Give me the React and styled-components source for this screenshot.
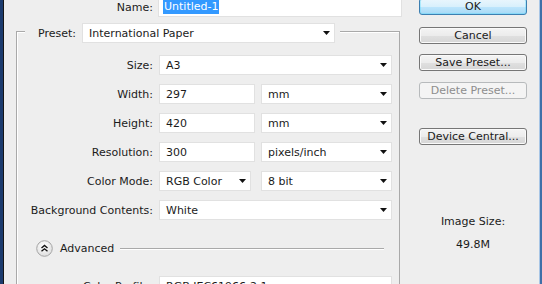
import React from "react";
import styled, { createGlobalStyle, css } from "styled-components";

const Global = createGlobalStyle`
  html, body { margin: 0; padding: 0; }
  body {
    width: 542px; height: 284px; overflow: hidden;
    font-family: "DejaVu Sans", Tahoma, Verdana, sans-serif;
    font-size: 11px; color: #1b1b1b; background: #eeeeee;
  }
  #root { height: 284px; }
`;

const Window = styled.div`
  display: flex;
  height: 284px;
  box-sizing: border-box;
  overflow: hidden;
  border-left: 3px solid #1c3b6e;
  border-right: 2px solid #3f6fa8;
`;

const Dialog = styled.div`
  flex: 1;
  display: flex;
  align-items: flex-start;
  background: #eeeeee;
  border-left: 1px solid #151515;
  border-right: 1px solid #a8c6e6;
`;

const Main = styled.div`
  width: 415px;
  margin-top: -3px;
  display: flex;
  flex-direction: column;
`;

const NameRow = styled.div`
  display: flex;
  align-items: center;
  height: 20px;
`;

const NameLabel = styled.div`
  width: 149px;
  text-align: right;
  margin-right: 5px;
`;

const Input = styled.div`
  box-sizing: border-box;
  height: 20px;
  width: ${(p) => p.$w}px;
  background: #ffffff;
  border: 1px solid #e1e1e1;
  display: flex;
  align-items: center;
  padding-left: ${(p) => (p.$pad ?? 6)}px;
  white-space: nowrap;
`;

const Selected = styled.span`
  background: #3399ff;
  color: #ffffff;
  padding: 0 1px;
  line-height: 14px;
`;

const Frame = styled.div`
  margin: 14px 0 0 12px;
  width: 384px;
  box-sizing: border-box;
  border: 1px solid #a9a9a9;
  border-top: none;
  box-shadow: inset 1px 0 0 #ffffff;
  height: 400px;
`;

const Head = styled.div`
  display: flex;
  align-items: center;
  margin-top: -8px;
  height: 20px;
`;

const HeadLine = styled.div`
  align-self: flex-start;
  margin-top: 8px;
  border-top: 1px solid #a9a9a9;
  box-shadow: 0 1px 0 #ffffff;
  ${(p) =>
    p.$grow
      ? css`
          flex: 1;
          margin-left: 5px;
        `
      : css`
          width: 8px;
        `}
`;

const PresetLabel = styled.div`
  width: 44px;
  margin-left: 13px;
`;

const Rows = styled.div`
  display: flex;
  flex-direction: column;
  gap: 9px;
  padding-top: 12px;
`;

const Row = styled.div`
  display: flex;
  align-items: center;
  height: 20px;
  margin-top: ${(p) => p.$mt || 0}px;
`;

const Label = styled.div`
  width: 136px;
  text-align: right;
  margin-right: 6px;
  white-space: nowrap;
`;

const Fields = styled.div`
  display: flex;
  gap: ${(p) => p.$gap}px;
`;

const SelectBox = styled(Input)`
  justify-content: space-between;
  padding-right: 4px;
`;

const Arrow = styled.svg`
  width: 7px;
  height: 4px;
  flex: none;
`;

const Select = ({ w, children }) => (
  <SelectBox $w={w}>
    <span>{children}</span>
    <Arrow viewBox="0 0 7 4">
      <polygon points="0,0 7,0 3.5,4" fill="#111" />
    </Arrow>
  </SelectBox>
);

const AdvancedRow = styled.div`
  display: flex;
  align-items: center;
  height: 16px;
  margin-top: 20px;
  padding-left: 19px;
  padding-right: 15px;
`;

const AdvText = styled.span`
  margin-left: 7px;
`;

const AdvLine = styled.div`
  flex: 1;
  margin-left: 6px;
  border-top: 1px solid #a9a9a9;
  box-shadow: 0 1px 0 #ffffff;
`;

const Side = styled.div`
  width: 108px;
  margin-top: -2px;
  display: flex;
  flex-direction: column;
`;

const Button = styled.div`
  box-sizing: border-box;
  height: 17px;
  margin-top: ${(p) => p.$mt || 0}px;
  border-radius: 3px;
  display: flex;
  align-items: center;
  justify-content: center;
  white-space: nowrap;
  ${(p) =>
    p.$primary
      ? css`
          border: 1px solid #3c7fb1;
          background: linear-gradient(#eaf6fd, #d9f0fc 50%, #bee6fd 51%, #a7d9f5);
          box-shadow: inset 0 0 0 1px #48d8fb55;
        `
      : p.$disabled
      ? css`
          border: 1px solid #b7babc;
          background: #f4f4f4;
          color: #8d8d8d;
        `
      : css`
          border: 1px solid #767676;
          background: linear-gradient(#f4f4f4, #ececec 50%, #e0e0e0 51%, #d6d6d6);
          box-shadow: inset 0 0 0 1px #fafafa;
        `}
`;

const Info = styled.div`
  text-align: center;
  line-height: 14px;
  margin-top: ${(p) => p.$mt}px;
`;

const AdvIcon = () => (
  <svg width="17" height="17" viewBox="0 0 17 17">
    <defs>
      <radialGradient id="ag" cx="0.45" cy="0.35" r="0.7">
        <stop offset="0" stopColor="#ffffff" />
        <stop offset="1" stopColor="#dcdcdc" />
      </radialGradient>
    </defs>
    <circle cx="8.5" cy="8.5" r="7.8" fill="url(#ag)" stroke="#a5a5a5" />
    <polyline points="5.5,8 8.5,5.5 11.5,8" fill="none" stroke="#111" strokeWidth="1.4" />
    <polyline points="5.5,11.3 8.5,8.8 11.5,11.3" fill="none" stroke="#111" strokeWidth="1.4" />
  </svg>
);

export default function App() {
  return (
    <>
      <Global />
      <Window>
        <Dialog>
          <Main>
            <NameRow>
              <NameLabel>Name:</NameLabel>
              <Input $w={244} $pad={4}>
                <Selected>Untitled-1</Selected>
              </Input>
            </NameRow>
            <Frame>
              <Head>
                <HeadLine />
                <PresetLabel>Preset:</PresetLabel>
                <Select w={253}>International Paper</Select>
                <HeadLine $grow />
              </Head>
              <Rows>
                <Row>
                  <Label>Size:</Label>
                  <Select w={233}>A3</Select>
                </Row>
                <Row>
                  <Label>Width:</Label>
                  <Fields $gap={6}>
                    <Input $w={96}>297</Input>
                    <Select w={131}>mm</Select>
                  </Fields>
                </Row>
                <Row>
                  <Label>Height:</Label>
                  <Fields $gap={6}>
                    <Input $w={96}>420</Input>
                    <Select w={131}>mm</Select>
                  </Fields>
                </Row>
                <Row>
                  <Label>Resolution:</Label>
                  <Fields $gap={6}>
                    <Input $w={96}>300</Input>
                    <Select w={131}>pixels/inch</Select>
                  </Fields>
                </Row>
                <Row>
                  <Label>Color Mode:</Label>
                  <Fields $gap={10}>
                    <Select w={92}>RGB Color</Select>
                    <Select w={131}>8 bit</Select>
                  </Fields>
                </Row>
                <Row>
                  <Label>Background Contents:</Label>
                  <Select w={233}>White</Select>
                </Row>
              </Rows>
              <AdvancedRow>
                <AdvIcon />
                <AdvText>Advanced</AdvText>
                <AdvLine />
              </AdvancedRow>
              <Row $mt={20}>
                <Label>Color Profile:</Label>
                <Select w={233}>RGB IEC61966-2.1</Select>
              </Row>
            </Frame>
          </Main>
          <Side>
            <Button $primary>OK</Button>
            <Button $mt={12}>Cancel</Button>
            <Button $mt={10}>Save Preset...</Button>
            <Button $mt={11} $disabled>Delete Preset...</Button>
            <Button $mt={29}>Device Central...</Button>
            <Info $mt={70}>Image Size:</Info>
            <Info $mt={9}>49.8M</Info>
          </Side>
        </Dialog>
      </Window>
    </>
  );
}
